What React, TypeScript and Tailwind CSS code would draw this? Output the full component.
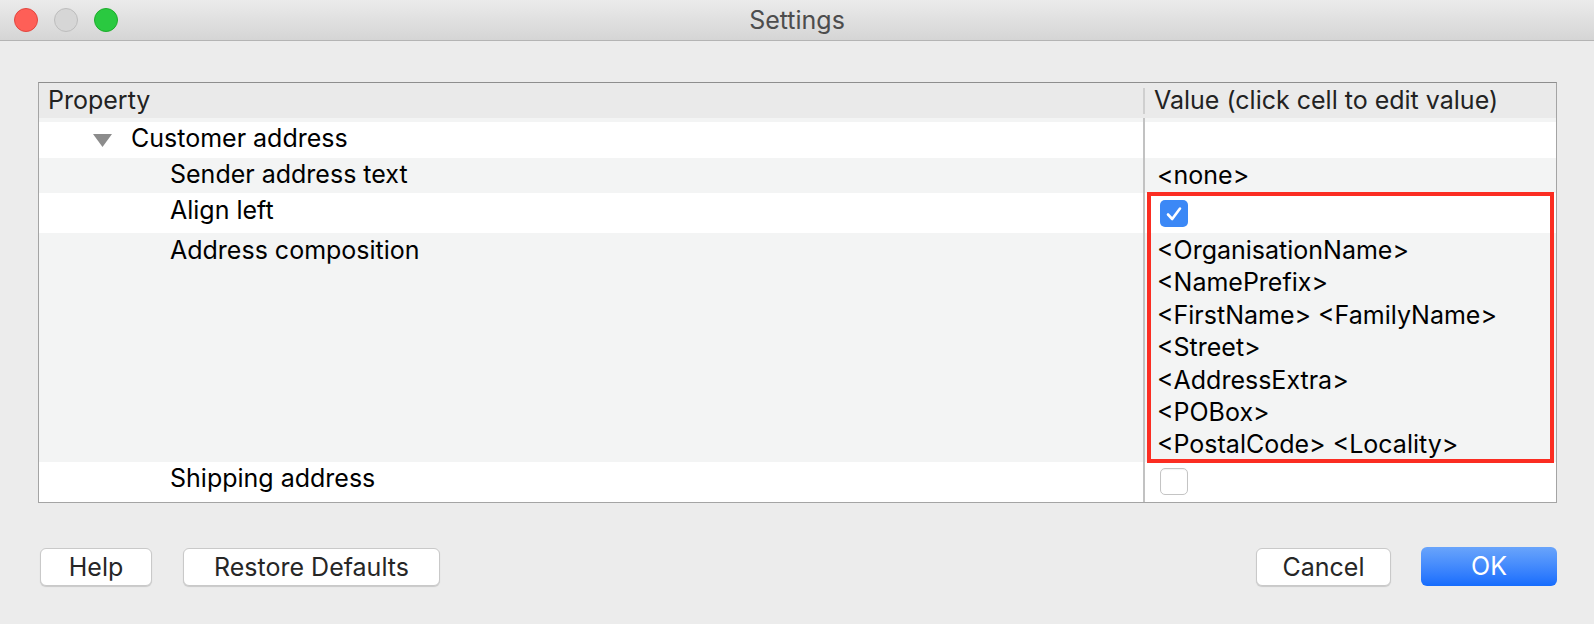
import React from "react";

const font = { fontFamily: "Inter, 'Noto Sans', sans-serif" };

function CheckedBox() {
  return (
    <div className="w-[28px] h-[27px] rounded-[5px] bg-[#3b88f6] flex items-center justify-center">
      <svg width="18" height="16" viewBox="0 0 18 16">
        <path d="M3 8.5 L7.2 13 L15 2.5" fill="none" stroke="#fff" strokeWidth="2.6" strokeLinecap="round" strokeLinejoin="round" />
      </svg>
    </div>
  );
}

function EmptyBox() {
  return <div className="w-[28px] h-[27px] rounded-[5px] bg-white border border-[#c4c4c4] shadow-[inset_0_1px_1px_rgba(0,0,0,0.05)]" />;
}

const addressLines = [
  "<OrganisationName>",
  "<NamePrefix>",
  "<FirstName> <FamilyName>",
  "<Street>",
  "<AddressExtra>",
  "<POBox>",
  "<PostalCode> <Locality>",
];

export default function App() {
  return (
    <div className="w-[1594px] h-[624px] bg-[#ececec] flex flex-col text-black" style={font}>
      {/* Title bar */}
      <div className="h-[41px] border-b border-[#b4b4b4] bg-gradient-to-b from-[#ebebeb] to-[#d5d5d5] relative flex items-center justify-center">
        <div className="absolute left-[14px] top-[8px] flex gap-[16px]">
          <div className="w-[24px] h-[24px] rounded-full bg-[#fe5f57] border border-[#e2463f]" />
          <div className="w-[24px] h-[24px] rounded-full bg-[#d6d6d6] border border-[#bdbdbd]" />
          <div className="w-[24px] h-[24px] rounded-full bg-[#2ac940] border border-[#1dad2b]" />
        </div>
        <span className="text-[25px] text-[#4d4d4d] leading-none">Settings</span>
      </div>

      {/* Table */}
      <div className="mt-[41px] ml-[38px] w-[1519px] h-[421px] border border-[#a4a4a4] border-t-[#8e8e8e] bg-white flex flex-col relative">
        {/* Header */}
        <div className="h-[35px] bg-[#eaeaea] flex text-[25px] text-[#222]">
          <div className="w-[1104px] pl-[9px] flex items-center">Property</div>
          <div className="flex items-center">
            <div className="w-[2px] h-[26px] bg-[#cfcfcf]" />
            <span className="pl-[9px]">Value (click cell to edit value)</span>
          </div>
        </div>
        {/* Body */}
        <div className="flex-1 flex text-[25px] leading-[32px]">
          <div className="w-[1104px] flex flex-col">
            <div className="h-[4px] bg-[#f3f4f4]" />
            <div className="h-[36px] bg-white flex items-start pl-[54px]">
              <svg width="19" height="13" viewBox="0 0 19 13" className="mt-[12px]">
                <path d="M0 0 H19 L9.5 13 Z" fill="#8c8c8c" />
              </svg>
              <span className="pl-[19px]">Customer address</span>
            </div>
            <div className="h-[35px] bg-[#f3f4f4] pl-[131px]">Sender address text</div>
            <div className="h-[40px] bg-white pl-[131px] pt-[1px]">Align left</div>
            <div className="h-[229px] bg-[#f3f4f4] pl-[131px] pt-[1px]">Address composition</div>
            <div className="flex-1 bg-white pl-[131px]">Shipping address</div>
          </div>
          <div className="w-[2px] bg-[#c2c2c2]" />
          <div className="flex-1 flex flex-col">
            <div className="h-[4px] bg-[#f3f4f4]" />
            <div className="h-[36px] bg-white" />
            <div className="h-[35px] bg-[#f3f4f4] pl-[12px] pt-[1px]">&lt;none&gt;</div>
            <div className="h-[40px] bg-white pl-[15px] pt-[7px]">
              <CheckedBox />
            </div>
            <div className="h-[229px] bg-[#f3f4f4] pl-[12px] pt-[1px] leading-[32.4px] flex flex-col">
              {addressLines.map((l) => (
                <span key={l}>{l}</span>
              ))}
            </div>
            <div className="flex-1 bg-white pl-[15px] pt-[6px]">
              <EmptyBox />
            </div>
          </div>
          {/* red highlight */}
          <div className="absolute left-[1108px] top-[109px] w-[407px] h-[271px] border-[4px] border-[#fb2d22] pointer-events-none" />
        </div>
      </div>

      {/* Buttons */}
      <div className="mt-[44px] px-[40px] pr-[37px] flex items-center text-[25px]">
        <button className="h-[38px] w-[112px] bg-white rounded-[6px] border border-[#c9c9c9] shadow-[0_1px_1px_rgba(0,0,0,0.15)] text-[#262626]">Help</button>
        <button className="ml-[31px] h-[38px] w-[257px] bg-white rounded-[6px] border border-[#c9c9c9] shadow-[0_1px_1px_rgba(0,0,0,0.15)] text-[#262626]">Restore Defaults</button>
        <div className="flex-1" />
        <button className="h-[38px] w-[135px] bg-white rounded-[6px] border border-[#c9c9c9] shadow-[0_1px_1px_rgba(0,0,0,0.15)] text-[#262626]">Cancel</button>
        <button className="ml-[30px] h-[39px] w-[136px] rounded-[6px] bg-gradient-to-b from-[#69a4fb] to-[#156cfd] text-white">OK</button>
      </div>
    </div>
  );
}
